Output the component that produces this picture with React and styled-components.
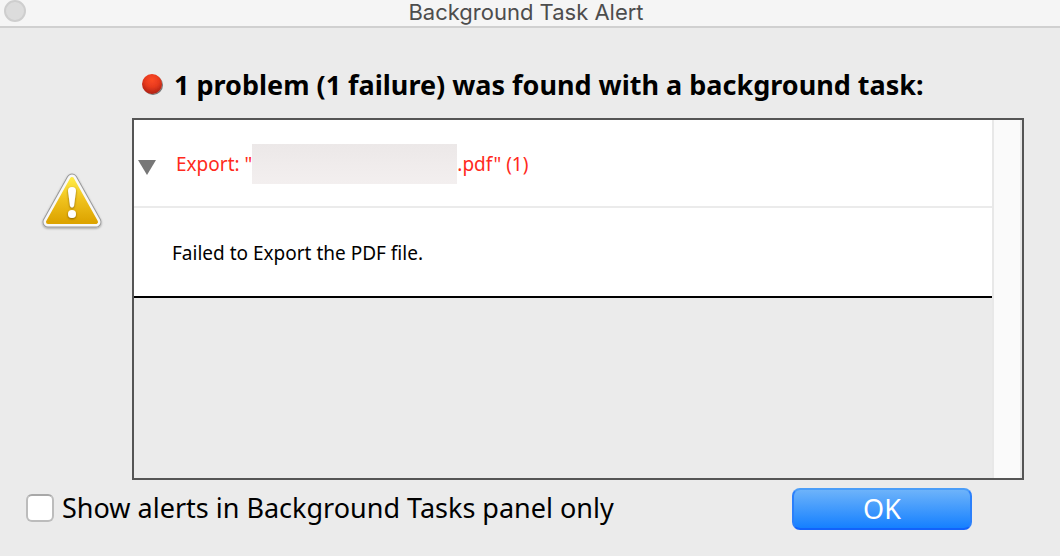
import styled, { createGlobalStyle } from 'styled-components'


const App = () => {
    return (
        <>
            <GlobalStyle />
            <Dialog>
                <TitleBar>
                    <CloseButton type="button" aria-label="Close" />
                    <Title>Background Task Alert</Title>
                </TitleBar>
                <Body>
                    <Heading>
                        <FailureDot />
                        1 problem (1 failure) was found with a background task:
                    </Heading>
                    <AlertIcon />
                    <Panel>
                        <TaskList>
                            <TaskRow>
                                <Toggle type="button" aria-label="Collapse task" aria-expanded="true">
                                    <svg width="18" height="15" viewBox="0 0 18 15">
                                        <path d="M0 0h18L9 15z" fill="#777" />
                                    </svg>
                                </Toggle>
                                <TaskName>
                                    Export: "<HiddenName />.pdf" (1)
                                </TaskName>
                            </TaskRow>
                            <DetailRow>Failed to Export the PDF file.</DetailRow>
                        </TaskList>
                        <ScrollTrack />
                    </Panel>
                </Body>
                <Footer>
                    <CheckLabel>
                        <Checkbox type="checkbox" />
                        Show alerts in Background Tasks panel only
                    </CheckLabel>
                    <OkButton type="button">OK</OkButton>
                </Footer>
            </Dialog>
        </>
    )
}

const FailureDot = () => (
    <svg width="24" height="24" viewBox="0 0 24 24" aria-hidden="true">
        <defs>
            <radialGradient id="dot" cx="0.5" cy="0.3" r="0.7">
                <stop offset="0" stopColor="#fc4b25" />
                <stop offset="0.5" stopColor="#e83a1e" />
                <stop offset="1" stopColor="#ad2013" />
            </radialGradient>
            <filter id="dotShadow" x="-30%" y="-30%" width="160%" height="160%">
                <feDropShadow dx="1" dy="1" stdDeviation="0.7" floodOpacity="0.5" />
            </filter>
        </defs>
        <circle cx="12" cy="11" r="10" fill="url(#dot)" filter="url(#dotShadow)" />
    </svg>
)

const AlertIcon = () => (
    <IconCell>
        <svg width="64" height="60" viewBox="0 0 64 60" role="img" aria-label="Warning">
            <defs>
                <linearGradient id="gold" x1="0" y1="0" x2="0" y2="1">
                    <stop offset="0" stopColor="#ffea43" />
                    <stop offset="0.45" stopColor="#f0c31f" />
                    <stop offset="1" stopColor="#dda400" />
                </linearGradient>
                <filter id="iconShadow" x="-20%" y="-20%" width="140%" height="140%">
                    <feDropShadow dx="0" dy="1" stdDeviation="0.8" floodOpacity="0.35" />
                </filter>
                <filter id="markShadow" x="-50%" y="-20%" width="200%" height="140%">
                    <feDropShadow dx="0" dy="1" stdDeviation="1" floodColor="#6b4b00" floodOpacity="0.8" />
                </filter>
            </defs>
            <g strokeLinejoin="round">
                <path d="M32 8L56 51H8Z" fill="#9a9a9a" stroke="#9a9a9a" strokeWidth="11" filter="url(#iconShadow)" />
                <path d="M32 8L56 51H8Z" fill="#f8f8f8" stroke="#f8f8f8" strokeWidth="9" />
                <path d="M32 8L56 51H8Z" fill="url(#gold)" stroke="url(#gold)" strokeWidth="4" />
            </g>
            <g fill="#fff" filter="url(#markShadow)">
                <path d="M28 20Q28 16 32 16Q36 16 36 20L34 35Q32 38 30 35Z" />
                <circle cx="32" cy="43" r="4" />
            </g>
        </svg>
    </IconCell>
)

export default App;

const GlobalStyle = createGlobalStyle`
  * {
    box-sizing: border-box;
  }

  body {
    margin: 0;
    background: #ebebeb;
    color: #000;
    font-family: "Noto Sans", sans-serif;
  }

  button,
  input {
    appearance: none;
    margin: 0;
    padding: 0;
    font: inherit;
  }
`

const Dialog = styled.main`
  background: #ebebeb;
`

const TitleBar = styled.header`
  display: grid;
  grid-template-columns: 26px 1fr 34px;
  height: 28px;
  background: #f5f5f5;
  border-bottom: 2px solid #d0d0d0;
`

const CloseButton = styled.button`
  width: 22px;
  height: 22px;
  margin-left: 4px;
  border: 2px solid #cecece;
  border-radius: 50%;
  background: #dcdcdc;
`

const Title = styled.h1`
  margin: 0;
  color: #4d4d4d;
  font: 400 22px/24px Inter, sans-serif;
  text-align: center;
`

const Body = styled.section`
  display: grid;
  grid-template-columns: 132px 1fr;
  padding: 39px 36px 0 0;
`

const Heading = styled.h2`
  grid-column: 2;
  display: flex;
  align-items: center;
  gap: 10px;
  height: 36px;
  margin: 0 0 15px;
  padding-left: 8px;
  font-size: 27px;
  line-height: 36px;
  font-weight: 700;
  white-space: nowrap;
`

const IconCell = styled.div`
  display: flex;
  justify-content: center;
  padding: 53px 0 0 12px;

  svg {
    display: block;
  }
`

const Panel = styled.div`
  display: flex;
  min-height: 362px;
  border: 2px solid #555;
`

const TaskList = styled.div`
  flex: 1;
`

const TaskRow = styled.div`
  display: flex;
  align-items: center;
  height: 88px;
  padding: 2px 0 0 4px;
  background: #fff;
  border-bottom: 2px solid #ebebeb;
`

const Toggle = styled.button`
  display: grid;
  place-items: end center;
  width: 18px;
  height: 22px;
  margin-right: 20px;
  border: 0;
  background: none;
`

const TaskName = styled.div`
  display: flex;
  align-items: center;
  color: #ff2a20;
  font-size: 19px;
  white-space: pre;
`

const HiddenName = styled.span`
  width: 205px;
  height: 40px;
  background: linear-gradient(#ece8e8, #f3efef);
`

const DetailRow = styled.div`
  display: flex;
  align-items: center;
  height: 90px;
  padding: 2px 0 0 38px;
  background: #fff;
  border-bottom: 2px solid #000;
  font-size: 19px;
`

const ScrollTrack = styled.div`
  width: 30px;
  border: solid #e8e8e8;
  border-width: 0 2px;
  background: #fafafa;
`

const Footer = styled.footer`
  display: flex;
  align-items: center;
  justify-content: space-between;
  padding: 8px 88px 8px 26px;
`

const CheckLabel = styled.label`
  display: flex;
  align-items: center;
  gap: 8px;
  padding-bottom: 2px;
  font-size: 27px;
  line-height: 36px;
`

const Checkbox = styled.input`
  width: 28px;
  height: 28px;
  border: 2px solid #bcbcbc;
  border-top-color: #a8a8a8;
  border-radius: 6px;
  background: #fff;
`

const OkButton = styled.button`
  width: 180px;
  height: 42px;
  border: 2px solid;
  border-color: #4a9df8 #2b80fb #1263fb;
  border-radius: 8px;
  background: linear-gradient(#6db3fa, #1580ff);
  color: #fff;
  font-size: 27px;
  line-height: 36px;
`
